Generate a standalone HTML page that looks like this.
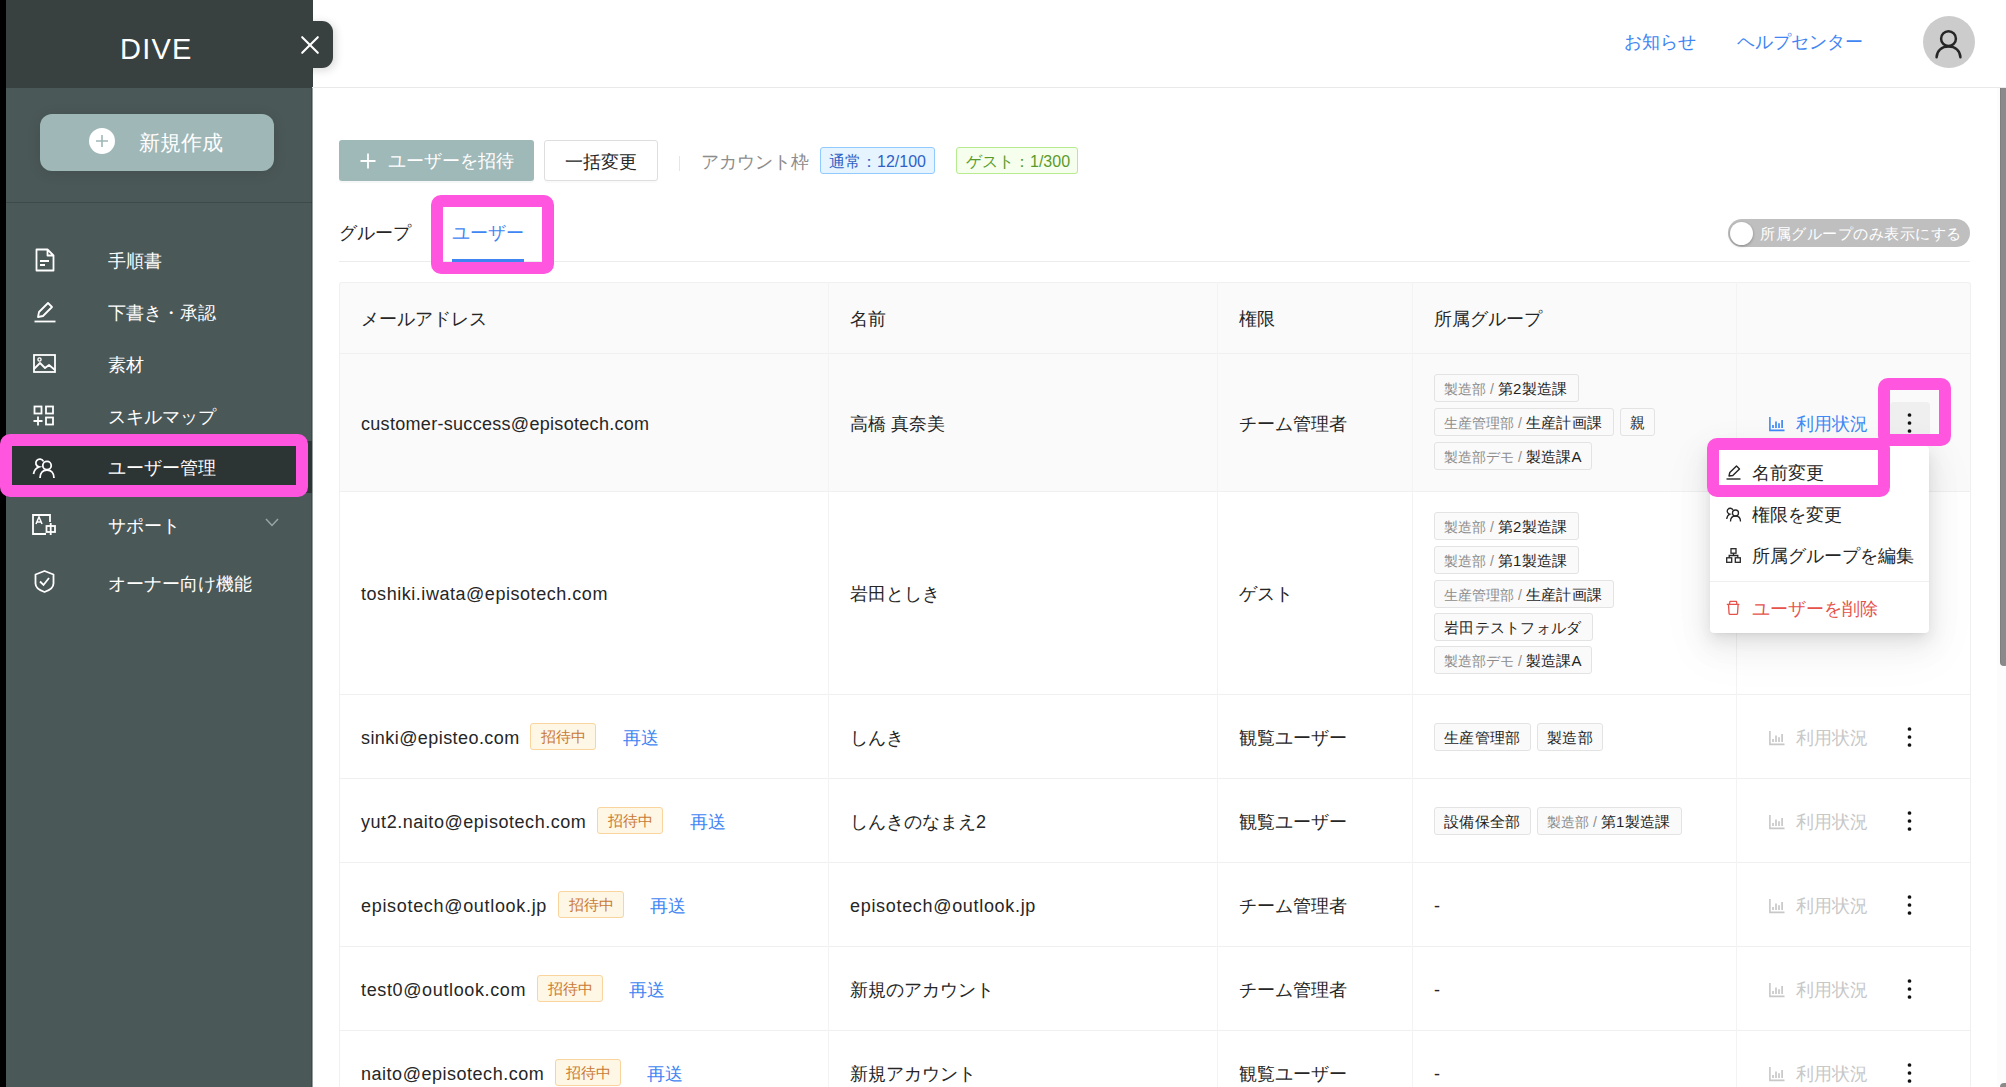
<!DOCTYPE html>
<html lang="ja">
<head>
<meta charset="utf-8">
<style>
*{box-sizing:border-box;margin:0;padding:0}
html,body{width:2006px;height:1087px;overflow:hidden;background:#fff}
body{position:relative;font-family:"Liberation Sans",sans-serif;color:#262626;font-size:18px}
.a{position:absolute}
.t{position:absolute;white-space:nowrap;line-height:24px;font-size:18px}
svg{position:absolute;overflow:visible}
/* sidebar */
#strip{left:0;top:0;width:6px;height:1087px;background:#000}
#side{left:6px;top:0;width:306px;height:1087px;background:#4b5858}
#sidehead{left:6px;top:0;width:306.5px;height:88px;background:#384140}
#dive{left:120px;top:31px;font-size:29px;line-height:36px;color:#fff;letter-spacing:1.2px}
#closetab{left:300px;top:21px;width:33px;height:47px;background:#384140;border-radius:0 11px 11px 0;box-shadow:2px 2px 10px rgba(0,0,0,.16)}
#closecover{left:290px;top:0;width:22px;height:88px;background:#384140}
#newbtn{left:40px;top:114px;width:234px;height:57px;border-radius:12px;background:#9fb7b7;box-shadow:0 2px 14px rgba(0,0,0,.10)}
#sep{left:6px;top:202px;width:306px;height:1px;background:#3e4a4a}
.nav{color:#fff;font-size:18px;left:108px}
#active{left:6px;top:441px;width:306px;height:52px;background:#2d3434}
.mag{position:absolute;border:12px solid #ff55df;border-radius:10px}
.em{letter-spacing:0.32px}
.badge{position:absolute;width:66px;height:27px;background:#fff7e6;border:1px solid #f9d49c;border-radius:3px;color:#c97a35;font-size:15px;line-height:25px;text-align:center;white-space:nowrap}
.tag{position:absolute;height:28px;background:#fafafa;border:1px solid #e3e3e3;border-radius:3px;white-space:nowrap;line-height:28px;padding-left:9px;color:#1f1f1f;font-size:15px}
.pre{color:#8c8c8c;font-size:14px}
.mn{color:#1f1f1f;font-size:15px;letter-spacing:.3px}
</style>
</head>
<body>
<div class="a" id="strip"></div>
<div class="a" id="side"></div>
<div class="a" id="sidehead"></div>
<div class="a" id="closetab"></div>
<div class="a" id="closecover"></div>
<div class="t" id="dive">DIVE</div>
<svg style="left:301px;top:36px" width="18" height="18" viewBox="0 0 18 18"><path d="M1.2 1.2L16.8 16.8M16.8 1.2L1.2 16.8" stroke="#fff" stroke-width="2.1" stroke-linecap="round" fill="none"/></svg>
<div class="a" id="newbtn"></div>
<svg style="left:89px;top:128px" width="26" height="26" viewBox="0 0 26 26"><circle cx="13" cy="13" r="13" fill="#fff"/><path d="M13 7v12M7 13h12" stroke="#9fb7b7" stroke-width="1.6"/></svg>
<div class="t" style="left:139px;top:131px;font-size:21px;line-height:24px;color:#fff">新規作成</div>
<div class="a" id="sep"></div>
<div class="a" style="left:311px;top:88px;width:1px;height:999px;background:rgba(0,0,0,.16)"></div>
<div class="a" style="left:312px;top:88px;width:1px;height:999px;background:rgba(60,74,74,.55)"></div>
<div class="a" id="active"></div>

<!-- nav icons -->
<svg style="left:35px;top:248px" width="20" height="24" viewBox="0 0 20 24"><path d="M1.5 1.5h11l6 6v15h-17z M12.5 1.5v6h6" fill="none" stroke="#fff" stroke-width="1.8" stroke-linejoin="round"/><path d="M5 13h9M5 17h5" stroke="#fff" stroke-width="1.8"/></svg>
<div class="t nav" style="top:249px">手順書</div>

<svg style="left:34px;top:301px" width="22" height="22" viewBox="0 0 22 22"><path d="M4 16l1-5L14 2l4 4-9 9z" fill="none" stroke="#fff" stroke-width="1.8" stroke-linejoin="round"/><path d="M0.5 20.5h21" stroke="#fff" stroke-width="1.8"/></svg>
<div class="t nav" style="top:301px">下書き・承認</div>

<svg style="left:33px;top:354px" width="23" height="19" viewBox="0 0 23 19"><rect x="1" y="1" width="21" height="17" fill="none" stroke="#fff" stroke-width="1.8"/><circle cx="6.5" cy="5.5" r="1.6" fill="none" stroke="#fff" stroke-width="1.4"/><path d="M1 15l6-6 5 5 4-3 6 5" fill="none" stroke="#fff" stroke-width="1.8" stroke-linejoin="round"/></svg>
<div class="t nav" style="top:353px">素材</div>

<svg style="left:33px;top:405px" width="22" height="21" viewBox="0 0 22 21"><rect x="1.5" y="1.5" width="7" height="7" fill="none" stroke="#fff" stroke-width="1.8"/><rect x="13" y="1.5" width="7" height="7" fill="none" stroke="#fff" stroke-width="1.8"/><rect x="13" y="12.5" width="7" height="7" fill="none" stroke="#fff" stroke-width="1.8"/><path d="M5 11.5v9M0.5 16h9" stroke="#fff" stroke-width="1.8"/></svg>
<div class="t nav" style="top:405px">スキルマップ</div>

<svg style="left:33px;top:456px" width="23" height="23" viewBox="0 0 23 23"><circle cx="14" cy="9.5" r="4.2" fill="none" stroke="#fff" stroke-width="1.8"/><path d="M7 22c0-5 3-8 7-8s7 3 7 8" fill="none" stroke="#fff" stroke-width="1.8"/><path d="M10.5 5.5a4 4 0 1 0-4.5 5.5c-3 1-5 4-5.5 7" fill="none" stroke="#fff" stroke-width="1.8"/></svg>
<div class="t nav" style="top:456px">ユーザー管理</div>

<svg style="left:32px;top:514px" width="25" height="21" viewBox="0 0 25 21"><path d="M14 1H1v19h13" fill="none" stroke="#fff" stroke-width="1.8"/><path d="M14 1h4v7" fill="none" stroke="#fff" stroke-width="1.8"/><path d="M4 10l3-7 3 7M5 8h4" fill="none" stroke="#fff" stroke-width="1.5"/><rect x="14.5" y="12" width="8.5" height="6" fill="none" stroke="#fff" stroke-width="1.8"/><path d="M18.7 9v12" stroke="#fff" stroke-width="1.8"/></svg>
<div class="t nav" style="top:514px">サポート</div>
<svg style="left:265px;top:518px" width="14" height="9" viewBox="0 0 14 9"><path d="M1 1l6 6.5L13 1" fill="none" stroke="#9aa5a5" stroke-width="1.5"/></svg>

<svg style="left:34px;top:570px" width="21" height="23" viewBox="0 0 21 23"><path d="M10.5 1L1.5 4.5v9c0 4 4.5 7 9 8.5 4.5-1.5 9-4.5 9-8.5v-9z" fill="none" stroke="#fff" stroke-width="1.8" stroke-linejoin="round"/><path d="M6 11.5l3.5 3.5 5.5-7" fill="none" stroke="#fff" stroke-width="1.8"/></svg>
<div class="t nav" style="top:572px">オーナー向け機能</div>

<div class="mag" style="left:0;top:434px;width:308px;height:63px"></div>

<!-- MAIN -->

<!-- top bar -->
<div class="a" style="left:312px;top:87px;width:1694px;height:1px;background:#e9e9e9"></div>
<div class="t" style="left:1624px;top:30px;color:#3f86f3">お知らせ</div>
<div class="t" style="left:1737px;top:30px;color:#3f86f3">ヘルプセンター</div>
<div class="a" style="left:1923px;top:16px;width:52px;height:52px;border-radius:50%;background:#cccccc"></div>
<svg style="left:1934px;top:29px" width="30" height="30" viewBox="0 0 30 30"><circle cx="14.5" cy="9.7" r="7.4" fill="none" stroke="#262626" stroke-width="2.5"/><path d="M2.6 28.3C2.9 21.5 7.8 17.6 14.5 17.6S26.1 21.5 26.4 28.3" fill="none" stroke="#262626" stroke-width="2.5" stroke-linecap="round"/></svg>
<div class="a" style="left:1997px;top:88px;width:9px;height:999px;background:#fcfcfc"></div>
<div class="a" style="left:2000px;top:1083px;width:10px;height:8px;background:#8a8a8a;border-radius:4px"></div>
<div class="a" style="left:2000px;top:88px;width:8px;height:578px;background:#8a8a8a;border-radius:0 0 4px 4px;box-shadow:inset 1px 0 0 rgba(0,0,0,.08)"></div>

<!-- toolbar -->
<div class="a" style="left:339px;top:140px;width:195px;height:41px;background:#9fb8b8;border-radius:3px;box-shadow:0 2px 0 rgba(0,0,0,.03)"></div>
<svg style="left:360px;top:153px" width="16" height="16" viewBox="0 0 16 16"><path d="M8 0.5v15M0.5 8h15" stroke="#fff" stroke-width="1.8"/></svg>
<div class="t" style="left:388px;top:149px;color:#fff">ユーザーを招待</div>
<div class="a" style="left:544px;top:140px;width:114px;height:41px;background:#fff;border:1px solid #dedede;border-radius:3px;box-shadow:0 2px 0 rgba(0,0,0,.02)"></div>
<div class="t" style="left:565px;top:150px;color:#262626">一括変更</div>
<div class="a" style="left:679px;top:156px;width:1px;height:15px;background:#e6e6e6"></div>
<div class="t" style="left:701px;top:150px;color:#8c8c8c">アカウント枠</div>
<div class="a" style="left:820px;top:147px;width:115px;height:27px;background:#e6f4ff;border:1px solid #91caff;border-radius:3px"></div>
<div class="t" style="left:829px;top:150px;font-size:16px;color:#2f61c4">通常：12/100</div>
<div class="a" style="left:956px;top:147px;width:122px;height:27px;background:#f6ffed;border:1px solid #b7eb8f;border-radius:3px"></div>
<div class="t" style="left:966px;top:150px;font-size:16px;color:#5b9a2a">ゲスト：1/300</div>

<!-- tabs -->
<div class="t" style="left:339px;top:221px;color:#262626">グループ</div>
<div class="t" style="left:452px;top:221px;color:#3f86f3">ユーザー</div>
<div class="a" style="left:339px;top:261px;width:1631px;height:1px;background:#ececec"></div>
<div class="a" style="left:452px;top:259px;width:72px;height:3px;background:#3f86f3"></div>

<div class="a" style="left:1728px;top:219px;width:242px;height:28px;border-radius:14px;background:#bfbfbf"></div>
<div class="a" style="left:1730px;top:222px;width:23px;height:23px;border-radius:50%;background:#fff;box-shadow:0 1px 3px rgba(0,0,0,.3)"></div>
<div class="t" style="left:1760px;top:221.5px;font-size:15px;letter-spacing:.52px;color:#fff">所属グループのみ表示にする</div>

<div class="a" style="left:339px;top:282px;width:1632px;height:209px;background:#fafafa;border-radius:3px 3px 0 0"></div>
<div class="a" style="left:339px;top:282px;width:1632px;height:900px;border:1px solid #f0f0f0;border-radius:3px"></div>
<div class="a" style="left:339px;top:353px;width:1632px;height:1px;background:#f0f0f0"></div>
<div class="a" style="left:339px;top:491px;width:1632px;height:1px;background:#f0f0f0"></div>
<div class="a" style="left:339px;top:694px;width:1632px;height:1px;background:#f0f0f0"></div>
<div class="a" style="left:339px;top:778px;width:1632px;height:1px;background:#f0f0f0"></div>
<div class="a" style="left:339px;top:862px;width:1632px;height:1px;background:#f0f0f0"></div>
<div class="a" style="left:339px;top:946px;width:1632px;height:1px;background:#f0f0f0"></div>
<div class="a" style="left:339px;top:1030px;width:1632px;height:1px;background:#f0f0f0"></div>
<div class="a" style="left:828px;top:282px;width:1px;height:805px;background:#f3f3f3"></div>
<div class="a" style="left:1217px;top:282px;width:1px;height:805px;background:#f3f3f3"></div>
<div class="a" style="left:1412px;top:282px;width:1px;height:805px;background:#f3f3f3"></div>
<div class="a" style="left:1736px;top:282px;width:1px;height:805px;background:#f3f3f3"></div>
<div class="t" style="left:361px;top:307px">メールアドレス</div>
<div class="t" style="left:850px;top:307px">名前</div>
<div class="t" style="left:1239px;top:307px">権限</div>
<div class="t" style="left:1434px;top:307px">所属グループ</div>
<div class="t" style="left:361px;top:412px;letter-spacing:0.301px">customer-success@episotech.com</div>
<div class="t" style="left:850px;top:412px">高橋 真奈美</div>
<div class="t" style="left:1239px;top:412px">チーム管理者</div>
<svg style="left:1768px;top:416px" width="17" height="16" viewBox="0 0 17 16"><path d="M1.9 1v13.4h14.6" fill="none" stroke="#4189f5" stroke-width="1.6"/><path d="M5 9v3M8 5.4v6.6M11 7.2v4.8M14.1 4.1v7.9" stroke="#4189f5" stroke-width="1.7"/></svg>
<div class="t" style="left:1796px;top:412px;color:#4189f5">利用状況</div>
<div class="a" style="left:1890px;top:402px;width:40px;height:40px;background:#efefef;border-radius:4px"></div>
<svg style="left:1907px;top:412.5px" width="5" height="20" viewBox="0 0 5 20"><circle cx="2.5" cy="2" r="1.85" fill="#111"/><circle cx="2.5" cy="10" r="1.85" fill="#111"/><circle cx="2.5" cy="18" r="1.85" fill="#111"/></svg>
<div class="t" style="left:361px;top:582px;letter-spacing:0.54px">toshiki.iwata@episotech.com</div>
<div class="t" style="left:850px;top:582px">岩田としき</div>
<div class="t" style="left:1239px;top:582px">ゲスト</div>
<svg style="left:1768px;top:586px" width="17" height="16" viewBox="0 0 17 16"><path d="M1.9 1v13.4h14.6" fill="none" stroke="#c8c8c8" stroke-width="1.6"/><path d="M5 9v3M8 5.4v6.6M11 7.2v4.8M14.1 4.1v7.9" stroke="#c8c8c8" stroke-width="1.7"/></svg>
<div class="t" style="left:1796px;top:582px;color:#c8c8c8">利用状況</div>
<svg style="left:1907px;top:582.5px" width="5" height="20" viewBox="0 0 5 20"><circle cx="2.5" cy="2" r="1.85" fill="#111"/><circle cx="2.5" cy="10" r="1.85" fill="#111"/><circle cx="2.5" cy="18" r="1.85" fill="#111"/></svg>
<div class="t" style="left:361px;top:726px;letter-spacing:0.431px">sinki@episteo.com</div>
<div class="t" style="left:850px;top:726px">しんき</div>
<div class="t" style="left:1239px;top:726px">観覧ユーザー</div>
<div class="badge" style="left:530px;top:723px">招待中</div>
<div class="t" style="left:623px;top:726px;color:#3f86f3">再送</div>
<svg style="left:1768px;top:730px" width="17" height="16" viewBox="0 0 17 16"><path d="M1.9 1v13.4h14.6" fill="none" stroke="#c8c8c8" stroke-width="1.6"/><path d="M5 9v3M8 5.4v6.6M11 7.2v4.8M14.1 4.1v7.9" stroke="#c8c8c8" stroke-width="1.7"/></svg>
<div class="t" style="left:1796px;top:726px;color:#c8c8c8">利用状況</div>
<svg style="left:1907px;top:726.5px" width="5" height="20" viewBox="0 0 5 20"><circle cx="2.5" cy="2" r="1.85" fill="#111"/><circle cx="2.5" cy="10" r="1.85" fill="#111"/><circle cx="2.5" cy="18" r="1.85" fill="#111"/></svg>
<div class="t" style="left:361px;top:810px;letter-spacing:0.54px">yut2.naito@episotech.com</div>
<div class="t" style="left:850px;top:810px">しんきのなまえ2</div>
<div class="t" style="left:1239px;top:810px">観覧ユーザー</div>
<div class="badge" style="left:597px;top:807px">招待中</div>
<div class="t" style="left:690px;top:810px;color:#3f86f3">再送</div>
<svg style="left:1768px;top:814px" width="17" height="16" viewBox="0 0 17 16"><path d="M1.9 1v13.4h14.6" fill="none" stroke="#c8c8c8" stroke-width="1.6"/><path d="M5 9v3M8 5.4v6.6M11 7.2v4.8M14.1 4.1v7.9" stroke="#c8c8c8" stroke-width="1.7"/></svg>
<div class="t" style="left:1796px;top:810px;color:#c8c8c8">利用状況</div>
<svg style="left:1907px;top:810.5px" width="5" height="20" viewBox="0 0 5 20"><circle cx="2.5" cy="2" r="1.85" fill="#111"/><circle cx="2.5" cy="10" r="1.85" fill="#111"/><circle cx="2.5" cy="18" r="1.85" fill="#111"/></svg>
<div class="t" style="left:361px;top:894px;letter-spacing:0.684px">episotech@outlook.jp</div>
<div class="t" style="left:850px;top:894px;letter-spacing:0.684px">episotech@outlook.jp</div>
<div class="t" style="left:1239px;top:894px">チーム管理者</div>
<div class="badge" style="left:558px;top:891px">招待中</div>
<div class="t" style="left:650px;top:894px;color:#3f86f3">再送</div>
<div class="t" style="left:1434px;top:894px">-</div>
<svg style="left:1768px;top:898px" width="17" height="16" viewBox="0 0 17 16"><path d="M1.9 1v13.4h14.6" fill="none" stroke="#c8c8c8" stroke-width="1.6"/><path d="M5 9v3M8 5.4v6.6M11 7.2v4.8M14.1 4.1v7.9" stroke="#c8c8c8" stroke-width="1.7"/></svg>
<div class="t" style="left:1796px;top:894px;color:#c8c8c8">利用状況</div>
<svg style="left:1907px;top:894.5px" width="5" height="20" viewBox="0 0 5 20"><circle cx="2.5" cy="2" r="1.85" fill="#111"/><circle cx="2.5" cy="10" r="1.85" fill="#111"/><circle cx="2.5" cy="18" r="1.85" fill="#111"/></svg>
<div class="t" style="left:361px;top:978px;letter-spacing:0.635px">test0@outlook.com</div>
<div class="t" style="left:850px;top:978px">新規のアカウント</div>
<div class="t" style="left:1239px;top:978px">チーム管理者</div>
<div class="badge" style="left:537px;top:975px">招待中</div>
<div class="t" style="left:629px;top:978px;color:#3f86f3">再送</div>
<div class="t" style="left:1434px;top:978px">-</div>
<svg style="left:1768px;top:982px" width="17" height="16" viewBox="0 0 17 16"><path d="M1.9 1v13.4h14.6" fill="none" stroke="#c8c8c8" stroke-width="1.6"/><path d="M5 9v3M8 5.4v6.6M11 7.2v4.8M14.1 4.1v7.9" stroke="#c8c8c8" stroke-width="1.7"/></svg>
<div class="t" style="left:1796px;top:978px;color:#c8c8c8">利用状況</div>
<svg style="left:1907px;top:978.5px" width="5" height="20" viewBox="0 0 5 20"><circle cx="2.5" cy="2" r="1.85" fill="#111"/><circle cx="2.5" cy="10" r="1.85" fill="#111"/><circle cx="2.5" cy="18" r="1.85" fill="#111"/></svg>
<div class="t" style="left:361px;top:1062px;letter-spacing:0.521px">naito@episotech.com</div>
<div class="t" style="left:850px;top:1062px">新規アカウント</div>
<div class="t" style="left:1239px;top:1062px">観覧ユーザー</div>
<div class="badge" style="left:555px;top:1059px">招待中</div>
<div class="t" style="left:647px;top:1062px;color:#3f86f3">再送</div>
<div class="t" style="left:1434px;top:1062px">-</div>
<svg style="left:1768px;top:1066px" width="17" height="16" viewBox="0 0 17 16"><path d="M1.9 1v13.4h14.6" fill="none" stroke="#c8c8c8" stroke-width="1.6"/><path d="M5 9v3M8 5.4v6.6M11 7.2v4.8M14.1 4.1v7.9" stroke="#c8c8c8" stroke-width="1.7"/></svg>
<div class="t" style="left:1796px;top:1062px;color:#c8c8c8">利用状況</div>
<svg style="left:1907px;top:1062.5px" width="5" height="20" viewBox="0 0 5 20"><circle cx="2.5" cy="2" r="1.85" fill="#111"/><circle cx="2.5" cy="10" r="1.85" fill="#111"/><circle cx="2.5" cy="18" r="1.85" fill="#111"/></svg>
<div class="tag" style="left:1434px;top:374px;width:145px"><span class="pre">製造部 / </span><span class="mn">第2製造課</span></div>
<div class="tag" style="left:1434px;top:408px;width:180px"><span class="pre">生産管理部 / </span><span class="mn">生産計画課</span></div>
<div class="tag" style="left:1620px;top:408px;width:35px"><span class="mn">親</span></div>
<div class="tag" style="left:1434px;top:442px;width:158px"><span class="pre">製造部デモ / </span><span class="mn">製造課A</span></div>
<div class="tag" style="left:1434px;top:512px;width:145px"><span class="pre">製造部 / </span><span class="mn">第2製造課</span></div>
<div class="tag" style="left:1434px;top:546px;width:145px"><span class="pre">製造部 / </span><span class="mn">第1製造課</span></div>
<div class="tag" style="left:1434px;top:580px;width:180px"><span class="pre">生産管理部 / </span><span class="mn">生産計画課</span></div>
<div class="tag" style="left:1434px;top:613px;width:159px"><span class="mn">岩田テストフォルダ</span></div>
<div class="tag" style="left:1434px;top:646px;width:158px"><span class="pre">製造部デモ / </span><span class="mn">製造課A</span></div>
<div class="tag" style="left:1434px;top:723px;width:97px"><span class="mn">生産管理部</span></div>
<div class="tag" style="left:1537px;top:723px;width:66px"><span class="mn">製造部</span></div>
<div class="tag" style="left:1434px;top:807px;width:97px"><span class="mn">設備保全部</span></div>
<div class="tag" style="left:1537px;top:807px;width:145px"><span class="pre">製造部 / </span><span class="mn">第1製造課</span></div>
<!-- dropdown -->
<div class="a" style="left:1710px;top:446px;width:219px;height:187px;background:#fff;border-radius:4px;box-shadow:0 6px 16px rgba(0,0,0,.08),0 3px 6px -4px rgba(0,0,0,.12),0 9px 28px 8px rgba(0,0,0,.05),0 14px 50px 12px rgba(0,0,0,.03)"></div>
<svg style="left:1726px;top:465px" width="15" height="15" viewBox="0 0 15 15"><path d="M3 11l0.8-3.5L10.5 1l3 3-6.7 6.5z" fill="none" stroke="#262626" stroke-width="1.4" stroke-linejoin="round"/><path d="M0.5 14h14" stroke="#262626" stroke-width="1.4"/></svg>
<div class="t" style="left:1752px;top:461px">名前変更</div>
<svg style="left:1726px;top:507px" width="16" height="15" viewBox="0 0 16 15"><circle cx="9.5" cy="6" r="3" fill="none" stroke="#262626" stroke-width="1.3"/><path d="M4.5 14.5c0-3.5 2.2-5.5 5-5.5s5 2 5 5.5" fill="none" stroke="#262626" stroke-width="1.3"/><path d="M7 3a3 3 0 1 0-3.2 4.2C2 8 1 10 0.7 12" fill="none" stroke="#262626" stroke-width="1.3"/></svg>
<div class="t" style="left:1752px;top:503px">権限を変更</div>
<svg style="left:1726px;top:548px" width="15" height="15" viewBox="0 0 15 15"><rect x="5" y="0.7" width="5" height="4.5" fill="none" stroke="#262626" stroke-width="1.3"/><rect x="0.7" y="9.8" width="5" height="4.5" fill="none" stroke="#262626" stroke-width="1.3"/><rect x="9.3" y="9.8" width="5" height="4.5" fill="none" stroke="#262626" stroke-width="1.3"/><path d="M7.5 5.2v2.3M3.2 9.8V7.5h8.6v2.3" fill="none" stroke="#262626" stroke-width="1.3"/></svg>
<div class="t" style="left:1752px;top:544px">所属グループを編集</div>
<div class="a" style="left:1710px;top:581px;width:219px;height:1px;background:#efefef"></div>
<svg style="left:1727px;top:601px" width="13" height="15" viewBox="0 0 13 15"><path d="M-0.2 3.3h12.6M2.4 3.3l0.6-2.9h6.4l0.6 2.9M1.5 3.6l0.55 8.8c0.05 0.6 0.5 1.05 1.1 1.05h6.3c0.6 0 1.05-0.45 1.1-1.05l0.55-8.8" fill="none" stroke="#e5534b" stroke-width="1.3" stroke-linejoin="round"/></svg>
<div class="t" style="left:1752px;top:597px;color:#e5534b">ユーザーを削除</div>

<!-- highlight boxes -->
<div class="mag" style="left:431px;top:195px;width:123px;height:79px"></div>
<div class="mag" style="left:1707px;top:438px;width:183px;height:59px"></div>
<div class="mag" style="left:1878px;top:378px;width:73px;height:68px"></div>

</body>
</html>
